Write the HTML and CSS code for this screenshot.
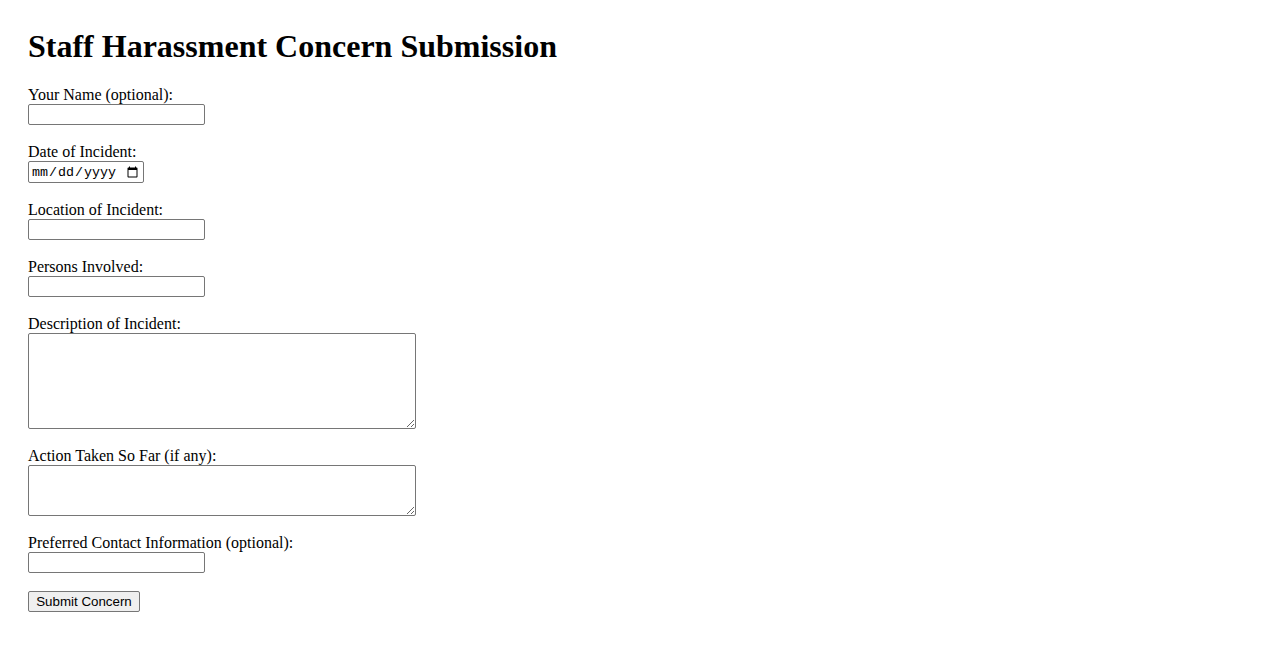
FILE: index.html
```html
<!DOCTYPE html>
<html lang="en">
<head>
<meta charset="utf-8">
<title>Staff Harassment Concern Submission</title>
<link rel="stylesheet" href="styles.css">
</head>
<body>
<div class="page">
  <h1 class="title">Staff Harassment Concern Submission</h1>
  <form class="form">
    <div class="field">
      <label class="label" for="name">Your Name (optional):</label>
      <input class="text-input" type="text" id="name" name="name">
    </div>
    <div class="field">
      <label class="label" for="date">Date of Incident:</label>
      <input class="date-input" type="date" id="date" name="date">
    </div>
    <div class="field">
      <label class="label" for="location">Location of Incident:</label>
      <input class="text-input" type="text" id="location" name="location">
    </div>
    <div class="field">
      <label class="label" for="persons">Persons Involved:</label>
      <input class="text-input" type="text" id="persons" name="persons">
    </div>
    <div class="field">
      <label class="label" for="description">Description of Incident:</label>
      <textarea class="area area-large" id="description" name="description"></textarea>
    </div>
    <div class="field">
      <label class="label" for="action">Action Taken So Far (if any):</label>
      <textarea class="area area-small" id="action" name="action"></textarea>
    </div>
    <div class="field">
      <label class="label" for="contact">Preferred Contact Information (optional):</label>
      <input class="text-input" type="text" id="contact" name="contact">
    </div>
    <div class="actions">
      <button class="submit" type="submit">Submit Concern</button>
    </div>
  </form>
</div>
</body>
</html>
```

FILE: styles.css
```css
html, body {
  background: #ffffff;
}
body {
  margin: 8px;
  font-family: "Liberation Serif", "Times New Roman", serif;
  font-size: 16px;
  color: #000000;
}
.page {
  padding: 20px;
}
.title {
  margin: 0 0 21.44px 0;
  font-size: 32px;
  font-weight: bold;
}
.form {
  display: flex;
  flex-direction: column;
  align-items: flex-start;
}
.field {
  display: flex;
  flex-direction: column;
  align-items: flex-start;
  margin-bottom: 18px;
}
.label {
  display: block;
}
.text-input {
  display: block;
  box-sizing: border-box;
  width: 177px;
  height: 21px;
  margin: 0;
  font-family: "Liberation Sans", Arial, sans-serif;
  font-size: 13.333px;
  border: 1px solid #767676;
  border-radius: 2px;
  padding: 1px 2px;
}
.date-input {
  display: block;
  box-sizing: border-box;
  width: 116px;
  height: 22px;
  margin: 0;
  font-family: "Liberation Mono", "Courier New", monospace;
  font-size: 13.333px;
  border: 1px solid #767676;
  border-radius: 2px;
  padding: 1px 2px;
}
.area {
  display: block;
  box-sizing: border-box;
  width: 388px;
  margin: 0;
  font-family: "Liberation Mono", monospace;
  font-size: 13.333px;
  border: 1px solid #767676;
  border-radius: 2px;
  padding: 2px;
}
.area-large {
  height: 96px;
}
.area-small {
  height: 51px;
}
.actions {
  padding-top: 0;
}
.submit {
  box-sizing: border-box;
  width: 112px;
  height: 21px;
  margin: 0;
  font-family: "Liberation Sans", Arial, sans-serif;
  font-size: 13.333px;
  background: #efefef;
  border: 1px solid #767676;
  border-radius: 2px;
  padding: 1px 6px;
  color: #000000;
}
```
